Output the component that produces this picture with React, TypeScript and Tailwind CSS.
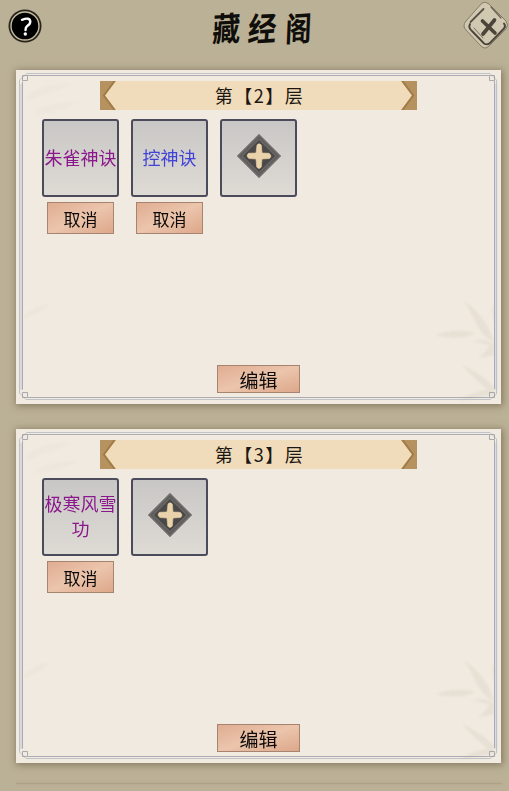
import React from 'react';

const floors = [
  {
    level: 2,
    skills: [
      { name: '朱雀神诀', color: 'text-[#8a188c]' },
      { name: '控神诀', color: 'text-[#4142d8]' },
    ],
  },
  {
    level: 3,
    skills: [{ name: '极寒风雪功', color: 'text-[#8a188c]' }],
  },
];

const PanelFrame: React.FC = () => (
  <svg className="absolute inset-0 pointer-events-none" width="485" height="334" viewBox="0 0 485 334" fill="none">
    <defs>
      <filter id="soft">
        <feGaussianBlur stdDeviation="0.8" />
      </filter>
    </defs>
    {/* bamboo leaves */}
    <g fill="#e3dccf" filter="url(#soft)" opacity="0.7">
      <path d="M420 265C432 261 447 259 459 263C449 269 433 268 420 265Z" />
      <path d="M449 232C464 242 474 258 478 272C464 266 459 249 449 232Z" />
      <path d="M457 271C466 269 473 271 478 274L478 285L463 288C468 284 471 280 474 275Z" />
      <path d="M446 295C461 302 471 310 478 317L478 325C466 315 456 306 446 295Z" />
      <path d="M443 331C453 324 466 320 478 318L478 324Z" />
      <path d="M475 234L479 243V253Z" />
      <path d="M8 246C16 239 24 235 33 234C28 241 18 244 8 249Z" opacity="0.4" />
      <path d="M10 26C26 16 40 13 55 14C41 21 28 23 10 32Z" opacity="0.25" />
      <path d="M20 40C34 34 48 33 62 32C48 41 34 41 20 44Z" opacity="0.25" />
    </g>
    <path d="M5 14V320" stroke="#dcd8d9" strokeWidth="3" />
    <path d="M480 14V320" stroke="#dcdae2" strokeWidth="3" />
    <path d="M11 3.5H474L480.5 10V324L474 329.5H10L3.5 323V10Z" stroke="#bfc3c8" />
    <path d="M6.500 11.500V319.500M12 5.500H473M478.500 11V319M12 327.500H473" stroke="#90919f" strokeOpacity="0.7" />
    <path d="M6.500 5.500H11.500V10.500H6.500ZM473.500 5.500H478.500V10.500H473.500ZM6.500 322.500V327.500H11.500V322.500ZM473.500 322.500H478.500V327.500H473.500Z" stroke="#8e8e95" strokeOpacity="0.7" />
  </svg>
);

const Ribbon: React.FC<{ level: number }> = ({ level }) => (
  <div className="relative mx-auto flex h-[29px] w-[317px] items-center justify-center bg-[#f0dcba]">
    <svg className="absolute left-0 top-0" width="18" height="29" viewBox="0 0 18 29">
      <path d="M0 0H16L5 14.500L16 29H0Z" fill="#b5925f" />
      <path d="M14.500 0L3.800 14.500L14.500 29" fill="none" stroke="#946c36" strokeOpacity="0.6" strokeWidth="1.800" />
    </svg>
    <span className="-mt-[2px] pl-[2px] text-[18px] leading-none tracking-[1.5px] text-[#1d1713]">第【{level}】层</span>
    <svg className="absolute right-0 top-0" width="18" height="29" viewBox="0 0 18 29">
      <path d="M18 0H2L13 14.500L2 29H18Z" fill="#b5925f" />
      <path d="M3.500 0L14.200 14.500L3.500 29" fill="none" stroke="#946c36" strokeOpacity="0.6" strokeWidth="1.800" />
    </svg>
  </div>
);

const Button: React.FC<{ label: string; className: string }> = ({ label, className }) => (
  <button
    className={`flex items-center justify-center border border-[#a68470] bg-linear-to-br from-[#e0ad92] via-[#ebc5ac] to-[#dda78a] leading-none text-[#0d0908] ${className}`}
  >
    {label}
  </button>
);

const slotClass =
  'flex h-[78px] w-[77px] items-center justify-center rounded-[3px] border-2 border-[#4b4b5c] bg-linear-to-b from-[#c9c7c5] to-[#dedbd5]';

const AddSlot: React.FC = () => (
  <div className={slotClass}>
    <svg className="-mt-1" width="46" height="46" viewBox="0 0 46 46">
      <path d="M23 1L45 23L23 45L1 23Z" fill="#6f6e6c" stroke="#8f8d89" />
      <path d="M23 4L42 23L23 42L4 23Z" fill="#696866" stroke="#5c5b5a" strokeWidth="1.200" />
      <path d="M23 7L39 23L23 39L7 23Z" fill="#4b4947" />
      <path
        d="M21 12Q23 9.500 25.300 12L26 20L33 20.300Q36.500 23 33.500 25.500L26 26L25.300 34Q23 37 20.700 34L20 26L13 25.500Q9.500 23 12.500 20.300L20 20Z"
        fill="#ead2aa"
        stroke="#ead2aa"
        strokeWidth="0.600"
      />
    </svg>
  </div>
);

const FloorPanel: React.FC<{ floor: (typeof floors)[number] }> = ({ floor }) => (
  <section className="relative flex h-[334px] w-[485px] flex-col bg-[#f0eae0] pt-[11px] pb-[11px] shadow-[1px_1px_7px_1px_rgba(100,88,62,0.6)]">
    <PanelFrame />
    <Ribbon level={floor.level} />
    <div className="relative mt-[9px] flex gap-3 pl-[26px]">
      {floor.skills.map((s) => (
        <div key={s.name} className="flex flex-col items-center gap-[5px]">
          <div className={slotClass}>
            <span className={`-mt-[2px] w-[73px] text-center text-[18px] leading-[25px] ${s.color}`}>{s.name}</span>
          </div>
          <Button label="取消" className="h-8 w-[67px] text-[17px]" />
        </div>
      ))}
      <AddSlot />
    </div>
    <Button label="编辑" className="relative mx-auto mt-auto h-7 w-[83px] text-[19px]" />
  </section>
);

const App: React.FC = () => {
  return (
    <div className="h-[791px] w-[509px] overflow-hidden bg-[#bbb196] font-['Noto_Sans_CJK_SC',sans-serif]">
      <header className="relative flex h-[70px] items-start justify-between">
        <svg className="mt-[9px] ml-2" width="34" height="34" viewBox="0 0 34 34">
          <circle cx="17" cy="17" r="16.500" fill="#29251c" />
          <circle cx="17" cy="17" r="14" fill="#000" stroke="#c6bca1" strokeWidth="1.400" />
          <path d="M14 10.800Q21.800 7.800 22.300 12.500Q22.300 15 19.500 16.800Q17.500 18.200 17.500 21" fill="none" stroke="#fff" strokeWidth="2.400" strokeLinecap="round" />
          <circle cx="17.300" cy="25" r="1.700" fill="#fff" />
        </svg>
        <h1 className="mt-[11px] ml-[19px] flex gap-[3px] text-[33px] leading-8 font-bold text-[#100e0b]">
          <span className="-skew-x-3 -skew-y-3 scale-x-[0.84]">藏</span>
          <span className="-skew-x-6 -skew-y-3 scale-x-[0.86]">经</span>
          <span className="-skew-x-3 -skew-y-3 scale-x-[0.8]">阁</span>
        </h1>
        <svg className="mt-[1px]" width="46" height="49" viewBox="0 0 46 49">
          <path d="M19 2Q22.500 0 26 3L43 20Q46 24 43 28L26 45Q22 49 18 45L3 29Q-1 25 3 20Z" fill="#d1c8b1" stroke="#857b67" />
          <path d="M20.500 8L7.500 21" fill="none" stroke="#5a5144" strokeWidth="1.800" strokeLinecap="round" />
          <path d="M28 6L38 17" fill="none" stroke="#6a6152" strokeWidth="1.200" strokeLinecap="round" />
          <path d="M7 23Q5 27 9 30L21 42.500Q24 44.500 27 42L41 27.500Q43 25 41 22.500" fill="none" stroke="#4c443a" strokeWidth="1.900" strokeLinecap="round" />
          <path d="M11 27L20 37" fill="none" stroke="#756b5a" strokeWidth="1" strokeLinecap="round" />
          <path d="M19.500 20L32 32M31.500 19L20 33" stroke="#4c443a" strokeWidth="3.700" strokeLinecap="round" />
        </svg>
      </header>
      <main className="flex flex-col gap-[25px] pl-4">
        {floors.map((floor) => (
          <FloorPanel key={floor.level} floor={floor} />
        ))}
      </main>
      <div className="mt-5 ml-4 h-px w-[486px] bg-[#ada286] shadow-[0_0_3px_#aca185]" />
    </div>
  );
};

export default App;
